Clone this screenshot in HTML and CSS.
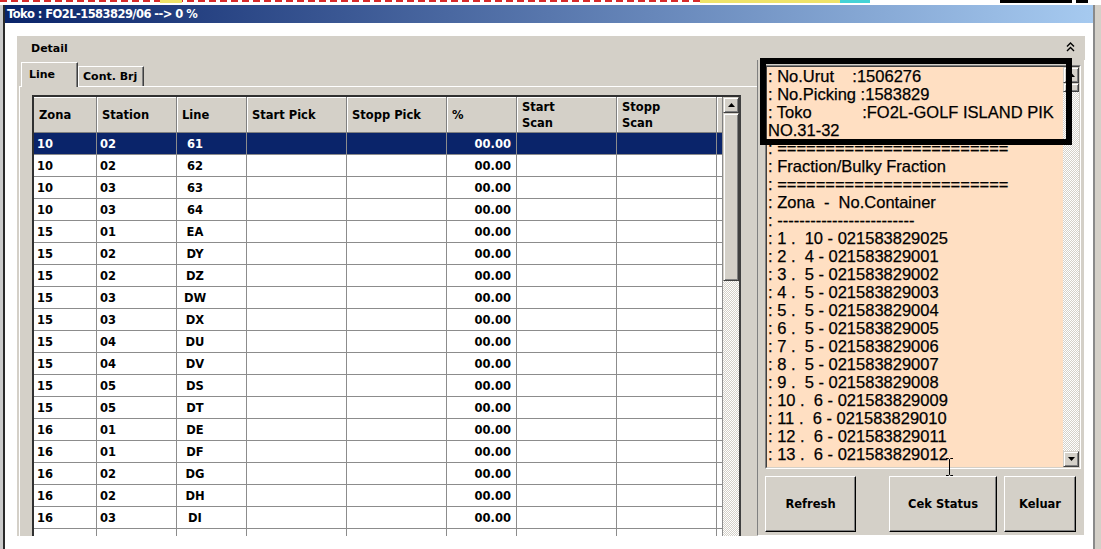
FILE: index.html
```html
<!DOCTYPE html>
<html>
<head>
<meta charset="utf-8">
<link rel="stylesheet" href="styles.css">
</head>
<body>
<div class="screen">
  <div class="topstrip"></div>
  <div class="frame">
    <div class="edge-left"></div>
    <div class="win">
      <div class="titlebar">Toko : FO2L-1583829/06 --&gt; 0 %</div>
      <div class="client">
        <div class="panel">
          <div class="panel-head">
            <span class="panel-title">Detail</span>
            <svg class="chev" width="9" height="10" viewBox="0 0 9 10"><path d="M1 4.5L4.5 1L8 4.5M1 9L4.5 5.5L8 9" fill="none" stroke="#000" stroke-width="1.4"/></svg>
          </div>
          <div class="panel-body">
            <div class="tabctl">
              <div class="tabstrip">
                <div class="tab tab-active">Line</div>
                <div class="tab tab-idle">Cont. Brj</div>
              </div>
              <div class="tabpage">
                <div class="grid">
                  <div class="gtable">
                    <div class="grow ghead">
                      <div class="c">Zona</div><div class="c">Station</div><div class="c">Line</div><div class="c">Start Pick</div><div class="c">Stopp Pick</div><div class="c">%</div><div class="c">Start<br>Scan</div><div class="c">Stopp<br>Scan</div><div class="c"></div>
                    </div>
                    <div class="grow sel"><div class="c">10</div><div class="c">02</div><div class="c"><span class="ln">61</span></div><div class="c"></div><div class="c"></div><div class="c pct">00.00</div><div class="c"></div><div class="c"></div><div class="c"></div></div>
                    <div class="grow"><div class="c">10</div><div class="c">02</div><div class="c"><span class="ln">62</span></div><div class="c"></div><div class="c"></div><div class="c pct">00.00</div><div class="c"></div><div class="c"></div><div class="c"></div></div>
                    <div class="grow"><div class="c">10</div><div class="c">03</div><div class="c"><span class="ln">63</span></div><div class="c"></div><div class="c"></div><div class="c pct">00.00</div><div class="c"></div><div class="c"></div><div class="c"></div></div>
                    <div class="grow"><div class="c">10</div><div class="c">03</div><div class="c"><span class="ln">64</span></div><div class="c"></div><div class="c"></div><div class="c pct">00.00</div><div class="c"></div><div class="c"></div><div class="c"></div></div>
                    <div class="grow"><div class="c">15</div><div class="c">01</div><div class="c"><span class="ln">EA</span></div><div class="c"></div><div class="c"></div><div class="c pct">00.00</div><div class="c"></div><div class="c"></div><div class="c"></div></div>
                    <div class="grow"><div class="c">15</div><div class="c">02</div><div class="c"><span class="ln">DY</span></div><div class="c"></div><div class="c"></div><div class="c pct">00.00</div><div class="c"></div><div class="c"></div><div class="c"></div></div>
                    <div class="grow"><div class="c">15</div><div class="c">02</div><div class="c"><span class="ln">DZ</span></div><div class="c"></div><div class="c"></div><div class="c pct">00.00</div><div class="c"></div><div class="c"></div><div class="c"></div></div>
                    <div class="grow"><div class="c">15</div><div class="c">03</div><div class="c"><span class="ln">DW</span></div><div class="c"></div><div class="c"></div><div class="c pct">00.00</div><div class="c"></div><div class="c"></div><div class="c"></div></div>
                    <div class="grow"><div class="c">15</div><div class="c">03</div><div class="c"><span class="ln">DX</span></div><div class="c"></div><div class="c"></div><div class="c pct">00.00</div><div class="c"></div><div class="c"></div><div class="c"></div></div>
                    <div class="grow"><div class="c">15</div><div class="c">04</div><div class="c"><span class="ln">DU</span></div><div class="c"></div><div class="c"></div><div class="c pct">00.00</div><div class="c"></div><div class="c"></div><div class="c"></div></div>
                    <div class="grow"><div class="c">15</div><div class="c">04</div><div class="c"><span class="ln">DV</span></div><div class="c"></div><div class="c"></div><div class="c pct">00.00</div><div class="c"></div><div class="c"></div><div class="c"></div></div>
                    <div class="grow"><div class="c">15</div><div class="c">05</div><div class="c"><span class="ln">DS</span></div><div class="c"></div><div class="c"></div><div class="c pct">00.00</div><div class="c"></div><div class="c"></div><div class="c"></div></div>
                    <div class="grow"><div class="c">15</div><div class="c">05</div><div class="c"><span class="ln">DT</span></div><div class="c"></div><div class="c"></div><div class="c pct">00.00</div><div class="c"></div><div class="c"></div><div class="c"></div></div>
                    <div class="grow"><div class="c">16</div><div class="c">01</div><div class="c"><span class="ln">DE</span></div><div class="c"></div><div class="c"></div><div class="c pct">00.00</div><div class="c"></div><div class="c"></div><div class="c"></div></div>
                    <div class="grow"><div class="c">16</div><div class="c">01</div><div class="c"><span class="ln">DF</span></div><div class="c"></div><div class="c"></div><div class="c pct">00.00</div><div class="c"></div><div class="c"></div><div class="c"></div></div>
                    <div class="grow"><div class="c">16</div><div class="c">02</div><div class="c"><span class="ln">DG</span></div><div class="c"></div><div class="c"></div><div class="c pct">00.00</div><div class="c"></div><div class="c"></div><div class="c"></div></div>
                    <div class="grow"><div class="c">16</div><div class="c">02</div><div class="c"><span class="ln">DH</span></div><div class="c"></div><div class="c"></div><div class="c pct">00.00</div><div class="c"></div><div class="c"></div><div class="c"></div></div>
                    <div class="grow"><div class="c">16</div><div class="c">03</div><div class="c"><span class="ln">DI</span></div><div class="c"></div><div class="c"></div><div class="c pct">00.00</div><div class="c"></div><div class="c"></div><div class="c"></div></div>
                    <div class="grow"><div class="c"></div><div class="c"></div><div class="c"></div><div class="c"></div><div class="c"></div><div class="c"></div><div class="c"></div><div class="c"></div><div class="c"></div></div>
                  </div>
                  <div class="vscroll">
                    <div class="sbtn"><svg width="7" height="4" viewBox="0 0 7 4"><path d="M3.5 0L7 4H0z" fill="#000"/></svg></div>
                    <div class="thumb thumb-grid"></div>
                    <div class="track"></div>
                  </div>
                </div>
              </div>
            </div>
            <div class="side">
              <div class="memo">
                <div class="memo-in">
                  <div class="memo-text">: No.Urut    :1506276
: No.Picking :1583829
: Toko           :FO2L-GOLF ISLAND PIK
NO.31-32
: ========================
: Fraction/Bulky Fraction
: ========================
: Zona  -  No.Container
: -------------------------
: 1 .  10 - 021583829025
: 2 .  4 - 021583829001
: 3 .  5 - 021583829002
: 4 .  5 - 021583829003
: 5 .  5 - 021583829004
: 6 .  5 - 021583829005
: 7 .  5 - 021583829006
: 8 .  5 - 021583829007
: 9 .  5 - 021583829008
: 10 .  6 - 021583829009
: 11 .  6 - 021583829010
: 12 .  6 - 021583829011
: 13 .  6 - 021583829012</div>
                  <div class="vscroll mscroll">
                    <div class="sbtn"><svg width="7" height="4" viewBox="0 0 7 4"><path d="M3.5 0L7 4H0z" fill="#000"/></svg></div>
                    <div class="thumb thumb-memo"></div>
                    <div class="track"></div>
                    <div class="sbtn"><svg width="7" height="4" viewBox="0 0 7 4"><path d="M0 0H7L3.5 4z" fill="#000"/></svg></div>
                  </div>
                </div>
              </div>
              <div class="btns">
                <div class="btn btn-refresh">Refresh</div>
                <div class="btn btn-cek">Cek Status</div>
                <div class="btn btn-keluar">Keluar</div>
              </div>
              <div class="annot"></div>
              <svg class="ibeam" width="9" height="20" viewBox="0 0 9 20"><path d="M1 1.5H3.5L4.5 2.5L5.5 1.5H8M4.5 2.5V17.5M1 18.5H3.5L4.5 17.5L5.5 18.5H8" fill="none" stroke="#000" stroke-width="1"/></svg>
            </div>
          </div>
        </div>
      </div>
    </div>
    <div class="edge-right"></div>
  </div>
</div>
</body>
</html>
```

FILE: styles.css
```css
* { box-sizing: border-box; }
html, body { margin: 0; padding: 0; }
body {
  width: 1101px;
  height: 549px;
  overflow: hidden;
  background: #fff;
  font-family: "DejaVu Sans", Verdana, sans-serif;
}
.screen {
  width: 1101px;
  height: 549px;
  overflow: hidden;
  display: flex;
  flex-direction: column;
}
.topstrip {
  height: 5px;
  flex: none;
  background:
    linear-gradient(#000, #000) 1000px 0 / 72px 3px no-repeat,
    linear-gradient(#000, #000) 1076px 0 / 12px 3px no-repeat,
    linear-gradient(#45d3d6, #45d3d6) 840px 0 / 30px 3px no-repeat,
    linear-gradient(#efe36a, #efe36a) 700px 0 / 140px 3px no-repeat,
    linear-gradient(#efe36a, #efe36a) 160px 0 / 22px 3px no-repeat,
    repeating-linear-gradient(90deg, #d62a2a 0 7px, #fff 7px 11px) 0 0 / 700px 2px no-repeat,
    #fff;
}
.frame {
  flex: 1;
  display: flex;
  min-height: 0;
}
.edge-left {
  width: 5px;
  flex: none;
  background: #cbcbcb;
  border-right: 2px solid #2b2b2b;
}
.win {
  width: 1088px;
  flex: none;
  display: flex;
  flex-direction: column;
  background: #d4d0c8;
}
.titlebar {
  height: 18px;
  flex: none;
  background: linear-gradient(90deg, #0a246a 0%, #a6caf0 100%);
  color: #fff;
  font-weight: bold;
  font-size: 11.5px;
  letter-spacing: -0.55px;
  line-height: 19px;
  padding-left: 2px;
  white-space: nowrap;
}
.client {
  flex: 1;
  background: #fff;
  padding: 13px 8px 10px 12px;
  min-height: 0;
}
.edge-right {
  width: 8px;
  flex: none;
  background: #d4d0c8;
  border-left: 2px solid #8a8a8a;
}

/* panel */
.panel {
  width: 1068px;
  height: 500px;
  background: #d4d0c8;
  display: flex;
  flex-direction: column;
  overflow: hidden;
}
.panel-head {
  height: 25px;
  flex: none;
  display: flex;
  align-items: center;
  justify-content: space-between;
  padding: 0 10px 0 14px;
  font-size: 11px;
  font-weight: bold;
  color: #000;
}
.chev { display: block; margin-top: -4px; }
.panel-body {
  flex: 1;
  display: flex;
  min-height: 0;
  margin-top: -1px;
}

/* tabs */
.tabctl {
  margin-left: 2px;
  width: 738px;
  flex: none;
  display: flex;
  flex-direction: column;
}
.tabstrip {
  height: 26px;
  flex: none;
  display: flex;
  align-items: flex-end;
  padding-left: 2px;
}
.tab {
  background: #d4d0c8;
  border-top: 1px solid #fff;
  border-left: 1px solid #fff;
  border-right: 1px solid #404040;
  box-shadow: inset -1px 0 #808080;
  font-size: 11px;
  font-weight: bold;
  line-height: 16px;
  color: #000;
  white-space: nowrap;
}
.tab-active {
  width: 57px;
  height: 25px;
  margin-bottom: -1px;
  padding: 4px 0 0 7px;
  position: relative;
  z-index: 1;
}
.tab-idle {
  width: 66px;
  height: 20px;
  padding: 2px 0 0 4px;
}
.tabpage {
  flex: 1;
  min-height: 0;
  border-top: 1px solid #fff;
  border-left: 1px solid #fff;
  padding: 8px 0 0 12px;
  overflow: hidden;
}

/* grid */
.grid {
  width: 709px;
  display: flex;
  border-top: 2px solid #303030;
  border-left: 2px solid #303030;
  border-right: 2px solid #404040;
}
.gtable {
  width: 689px;
  flex: none;
  background: #fff;
}
.grow {
  display: grid;
  grid-template-columns: 63px 80px 70px 100px 100px 70px 100px 100px 6px;
  height: 22px;
  font-size: 11.5px;
  font-weight: bold;
  color: #000;
}
.grow .c {
  border-right: 1px solid #8c8c8c;
  border-bottom: 1px solid #8c8c8c;
  display: flex;
  align-items: center;
  padding-left: 3px;
  white-space: nowrap;
  overflow: hidden;
}
.ghead {
  height: 36px;
}
.ghead .c {
  background: #d4d0c8;
  padding-left: 5px;
  line-height: 16px;
  box-shadow: inset 1px 1px #fff;
  border-right-color: #808080;
  border-bottom-color: #808080;
}
.ghead .c:first-child { box-shadow: inset 0 1px #fff; }
.sel { background: #0a246a; color: #fff; }
.grow .ln {
  display: inline-block;
  width: 36px;
  text-align: center;
  margin-left: -3px;
}
.grow .pct {
  justify-content: flex-end;
  padding: 0 5px 0 0;
}

/* scrollbars */
.vscroll {
  width: 16px;
  flex: none;
  display: flex;
  flex-direction: column;
  background: repeating-conic-gradient(#d4d0c8 0 25%, #fff 0 50%) 0 0 / 2px 2px;
}
.sbtn, .thumb {
  flex: none;
  background: #d4d0c8;
  border: 1px solid;
  border-color: #d4d0c8 #404040 #404040 #d4d0c8;
  box-shadow: inset 1px 1px #fff, inset -1px -1px #808080;
}
.sbtn {
  height: 16px;
  display: flex;
  align-items: center;
  justify-content: center;
}
.sbtn svg { display: block; }
.thumb-grid { height: 168px; }
.thumb-memo { height: 9px; }
.track { flex: 1; }

/* side */
.side {
  width: 328px;
  flex: none;
  border-left: 1px solid #808080;
  border-right: 1px solid #fff;
  border-bottom: 1px solid #fff;
  padding: 5px 0 0 7px;
  position: relative;
}
.memo {
  width: 316px;
  height: 404px;
  border: 1px solid;
  border-color: #808080 #fff #fff #808080;
}
.memo-in {
  height: 100%;
  display: flex;
  border: 1px solid;
  border-color: #404040 #d4d0c8 #d4d0c8 #404040;
}
.memo-text {
  flex: 1;
  min-width: 0;
  background: #ffdfc2;
  font-family: "Liberation Sans", Arial, sans-serif;
  font-size: 16.5px;
  line-height: 18px;
  color: #000;
  -webkit-text-stroke: 0.25px #000;
  white-space: pre;
  overflow: hidden;
  padding-left: 1px;
}
.btns {
  display: flex;
  margin-top: 7px;
  height: 56px;
}
.btn {
  height: 56px;
  background: #d4d0c8;
  border: 1px solid;
  border-color: #fff #000 #000 #fff;
  box-shadow: inset -1px -1px #808080;
  display: flex;
  align-items: center;
  justify-content: center;
  font-size: 11.5px;
  font-weight: bold;
  color: #000;
}
.btn-refresh { width: 91px; }
.btn-cek { width: 108px; margin-left: 33px; }
.btn-keluar { width: 72px; margin-left: 7px; }
.annot {
  position: absolute;
  left: 2px;
  top: -2px;
  width: 312px;
  height: 87px;
  border: 6px solid #000;
}
.ibeam {
  position: absolute;
  left: 187px;
  top: 397px;
}
```
